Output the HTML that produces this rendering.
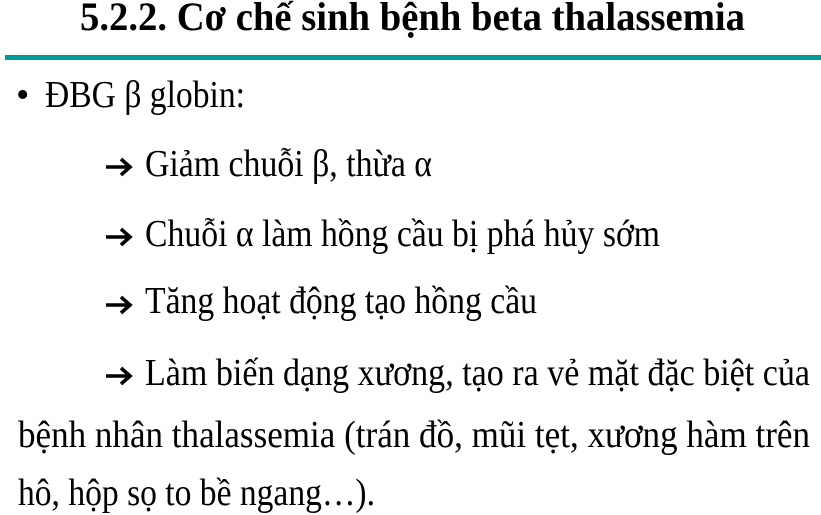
<!DOCTYPE html>
<html><head><meta charset="utf-8"><style>
html,body{margin:0;padding:0;background:#fff;width:821px;height:515px;overflow:hidden;position:relative}
.l{position:absolute;white-space:nowrap;font-family:"Liberation Serif","Noto Serif CJK SC",serif;font-size:38px;line-height:1;color:#000;transform-origin:0 0}
.t{font-weight:bold;font-size:40px}
.bar{position:absolute;left:5px;top:55px;width:816px;height:5px;background:#009a99}
svg.a{position:absolute}
</style></head><body>
<div class="l t" data-w="665" style="left:80px;top:-3px">5.2.2. Cơ chế sinh bệnh beta thalassemia</div>
<div class="bar"></div>
<div class="l" style="left:16px;top:76px">•</div>
<div class="l" data-w="200" style="left:45px;top:76px">ĐBG β globin:</div>

<svg class="a" style="left:105px;top:157px" width="28" height="20" viewBox="0 0 28 20"><path d="M1 10H25M16 2L25 10L16 18" stroke="#000" stroke-width="3.6" fill="none"/></svg>
<div class="l" data-w="287" style="left:145px;top:145px">Giảm chuỗi β, thừa α</div>

<svg class="a" style="left:105px;top:227px" width="28" height="20" viewBox="0 0 28 20"><path d="M1 10H25M16 2L25 10L16 18" stroke="#000" stroke-width="3.6" fill="none"/></svg>
<div class="l" data-w="515" style="left:145px;top:215px">Chuỗi α làm hồng cầu bị phá hủy sớm</div>

<svg class="a" style="left:105px;top:295px" width="28" height="20" viewBox="0 0 28 20"><path d="M1 10H25M16 2L25 10L16 18" stroke="#000" stroke-width="3.6" fill="none"/></svg>
<div class="l" data-w="392" style="left:145px;top:282px">Tăng hoạt động tạo hồng cầu</div>

<svg class="a" style="left:105px;top:366px" width="28" height="20" viewBox="0 0 28 20"><path d="M1 10H25M16 2L25 10L16 18" stroke="#000" stroke-width="3.6" fill="none"/></svg>
<div class="l" data-w="665" style="left:145px;top:354px">Làm biến dạng xương, tạo ra vẻ mặt đặc biệt của</div>

<div class="l" data-w="792" style="left:18px;top:416px">bệnh nhân thalassemia (trán đồ, mũi tẹt, xương hàm trên</div>
<div class="l" data-w="357" style="left:18px;top:474px">hô, hộp sọ to bề ngang…).</div>
<script>
document.querySelectorAll('[data-w]').forEach(function(e){var w=e.getBoundingClientRect().width;var t=+e.getAttribute('data-w');e.style.transform='scaleX('+(t/w)+')';});
</script>
</body></html>
